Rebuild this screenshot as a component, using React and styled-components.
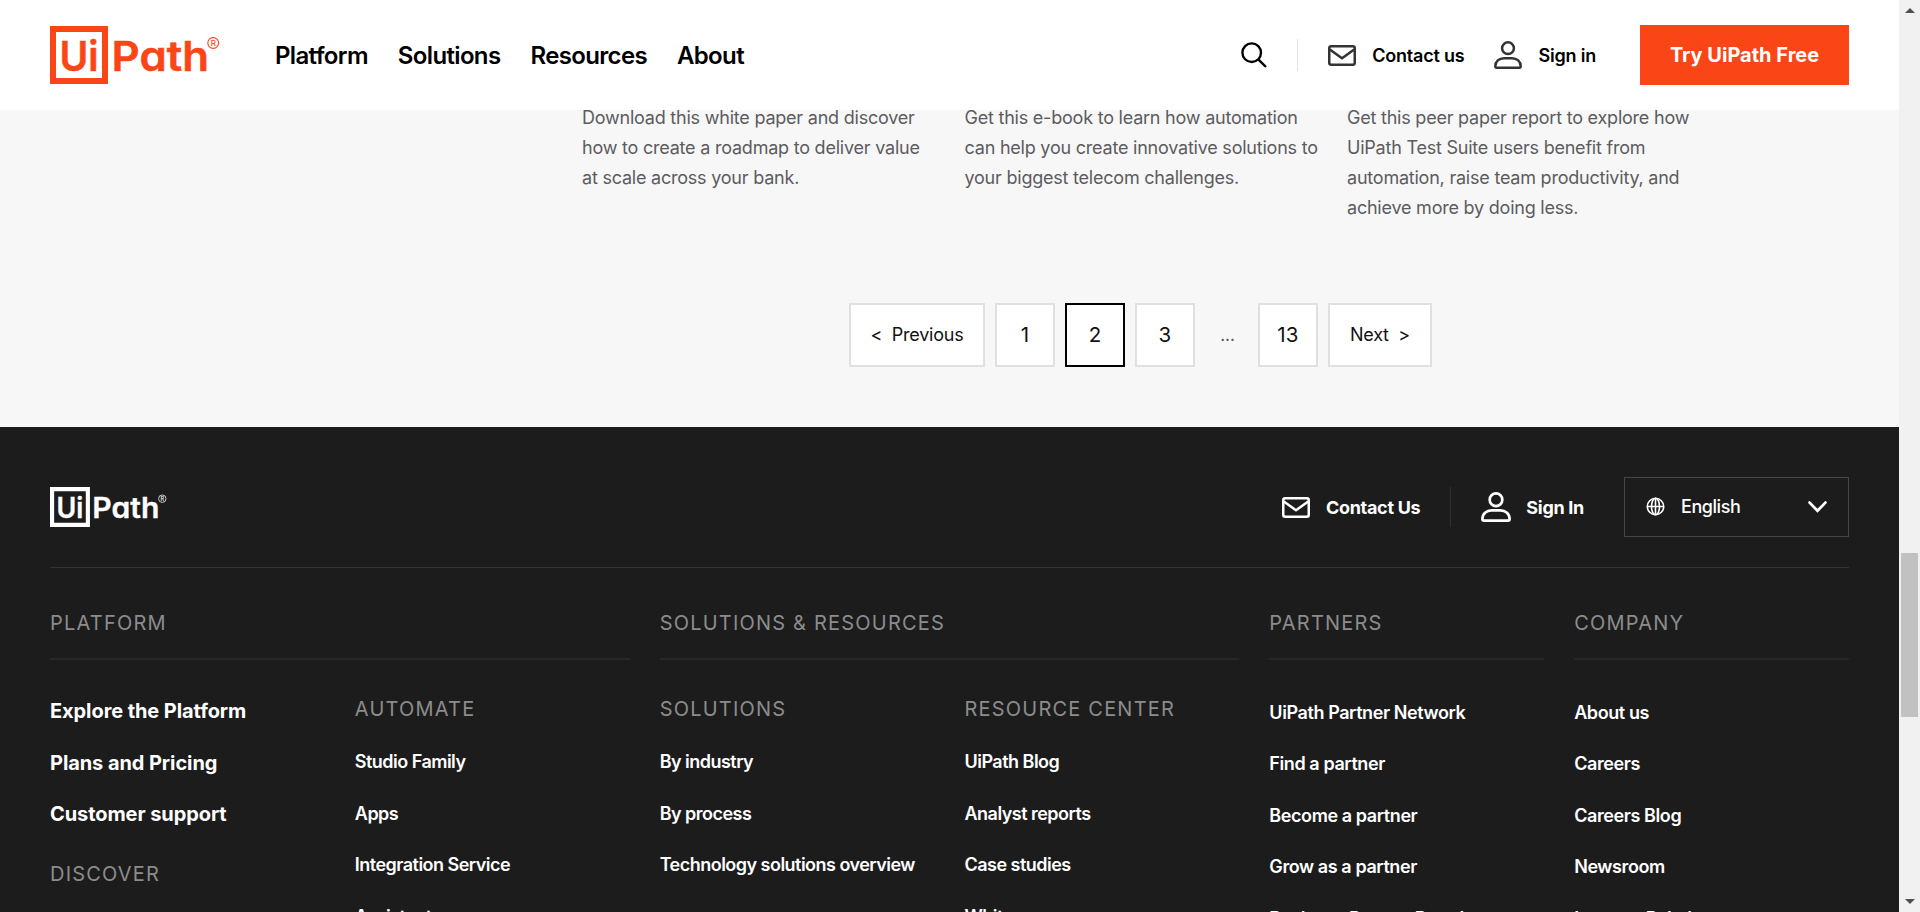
import React from "react";
import styled, { createGlobalStyle } from "styled-components";

const Global = createGlobalStyle`
  *, *::before, *::after { box-sizing: border-box; }
  html, body { margin: 0; padding: 0; }
  body { font-family: Inter, "Liberation Sans", sans-serif; overflow: hidden; }
`;

const Window = styled.div`
  display: grid;
  grid-template-columns: 1fr 21px;
  width: 1920px;
  height: 912px;
  overflow: hidden;
`;

const Page = styled.div`
  display: flex;
  flex-direction: column;
  min-width: 0;
  height: 912px;
  overflow: hidden;
  background: #f7f7f7;
`;

const Header = styled.header`
  display: flex;
  align-items: center;
  flex: none;
  height: 110px;
  padding: 0 50px;
  background: #fff;
`;

const LogoSvg = styled.svg`
  display: block;
  flex: none;
  font-family: Inter, sans-serif;
  font-feature-settings: "cv11";
`;

const Nav = styled.nav`
  display: flex;
  gap: 30px;
  margin-left: 55px;
`;

const NavLink = styled.a`
  font-size: 24px;
  font-weight: 600;
  letter-spacing: -0.65px;
  color: #000;
`;

const Actions = styled.div`
  display: flex;
  align-items: center;
  margin-left: auto;
`;

const Divider = styled.span`
  width: 1px;
  height: ${(p) => p.$height}px;
  margin: ${(p) => p.$margin};
  background: ${(p) => p.$color};
`;

const ActionLink = styled.a`
  display: flex;
  align-items: center;
  gap: ${(p) => p.$gap}px;
  margin-right: ${(p) => p.$after}px;
  font-size: 18px;
  font-weight: ${(p) => p.$weight};
  letter-spacing: ${(p) => p.$spacing}px;
  white-space: nowrap;
  color: ${(p) => p.$color};
`;

const PrimaryButton = styled.button`
  width: 209px;
  height: 60px;
  padding: 0;
  border: 0;
  background: #fa4616;
  color: #fff;
  font: 700 20px Inter, sans-serif;
  letter-spacing: 0;
`;

const Results = styled.main`
  flex: none;
  height: 317px;
  padding-left: 582px;
  padding-right: 50px;
  padding-bottom: 60px;
  display: flex;
  flex-direction: column;
  justify-content: space-between;
`;

const Cards = styled.div`
  display: grid;
  grid-template-columns: repeat(3, 382.5px);
  margin-top: -7px;
  clip-path: inset(7px 0 0 0);
`;

const CardText = styled.p`
  margin: 0;
  font-size: 18px;
  line-height: 30px;
  letter-spacing: -0.22px;
  color: #5c5c5e;
  white-space: nowrap;
`;

const Pagination = styled.div`
  display: flex;
  align-items: center;
  gap: 10px;
  margin-left: 267px;
`;

const PageButton = styled.button`
  width: ${(p) => p.$width || 60}px;
  height: 64px;
  padding: 0 0 1px;
  border: 2px solid ${(p) => (p.$current ? "#000" : "#e0e0e0")};
  background: #fff;
  color: #111;
  font: 400 ${(p) => (p.$width ? 18 : 20.5)}px Inter, sans-serif;
  letter-spacing: ${(p) => (p.$width ? -0.25 : 0.2)}px;
  white-space: pre;
`;

const Ellipsis = styled.span`
  width: 43px;
  padding-left: 2px;
  text-align: center;
  font-size: 17px;
  color: #555;
`;

const Footer = styled.footer`
  flex: 1;
  min-height: 0;
  padding: 50px 50px 0;
  overflow: hidden;
  background: #1c1c1c;
  color: #fff;
`;

const FooterTop = styled.div`
  display: flex;
  align-items: center;
  height: 91px;
  padding-bottom: 30px;
  border-bottom: 1px solid #343434;
`;

const LanguageSelect = styled.div`
  display: flex;
  align-items: center;
  width: 225px;
  height: 60px;
  padding: 0 21px 1px 21px;
  border: 1px solid #474747;
  font-size: 18px;
  font-weight: 500;
  letter-spacing: -0.45px;
`;

const LanguageName = styled.span`
  flex: 1;
  margin-left: 16px;
`;

const FooterGrid = styled.div`
  display: grid;
  grid-template-columns: repeat(6, 1fr);
  column-gap: 30px;
`;

const GroupTitle = styled.h3`
  grid-column: span ${(p) => p.$span};
  margin: 0;
  height: 92px;
  padding-top: 43px;
  border-bottom: 2px solid #272727;
  font-size: 20px;
  line-height: 24px;
  font-weight: 400;
  letter-spacing: 1.2px;
  color: #8c8c8c;
`;

const Column = styled.div`
  display: flex;
  flex-direction: column;
  padding-top: ${(p) => p.$top}px;
  letter-spacing: ${(p) => p.$spacing}px;
`;

const SubTitle = styled.h4`
  margin: ${(p) => p.$top || 0}px 0 ${(p) => p.$bottom || 0}px;
  font-size: 20px;
  line-height: 24px;
  font-weight: 400;
  letter-spacing: 1.2px;
  color: #8c8c8c;
`;

const FooterLink = styled.a`
  height: 51.6px;
  line-height: 51.6px;
  font-size: ${(p) => (p.$large ? 20 : 18)}px;
  font-weight: ${(p) => (p.$large ? 700 : 600)};
  white-space: nowrap;
`;

const Scrollbar = styled.div`
  display: flex;
  flex-direction: column;
  align-items: center;
  height: 912px;
  padding: 8px 0;
  background: #f1f1f1;
`;

const ScrollArrow = styled.span`
  border: 5px solid transparent;
  border-top-width: ${(p) => (p.$up ? 0 : 5)}px;
  border-bottom-width: ${(p) => (p.$up ? 5 : 0)}px;
  border-${(p) => (p.$up ? "bottom" : "top")}-color: #505050;
`;

const ScrollThumb = styled.span`
  width: 17px;
  height: 164px;
  margin: 540px 0 auto;
  background: #c1c1c1;
`;

const Logo = ({ width, color }) => (
  <LogoSvg width={width} height={(width * 58) / 170} viewBox="0 0 170 58" fill={color}>
    <path fillRule="evenodd" d="M0 0H58V58H0ZM6 6V52H52V6Z" />
    <g fontSize="41" fontWeight="600" stroke={color} strokeWidth="0.5">
      <text x="9.5" y="45" textLength="39" lengthAdjust="spacingAndGlyphs">Ui</text>
      <text x="61.5" y="45" textLength="97.5" lengthAdjust="spacingAndGlyphs">Path</text>
    </g>
    <circle cx="163.2" cy="17" r="5.4" fill="none" stroke={color} strokeWidth="1.1" />
    <text x="163.3" y="20" fontSize="8" fontWeight="500" textAnchor="middle">R</text>
  </LogoSvg>
);

const SearchIcon = () => (
  <svg width="26" height="26" viewBox="0 0 26 26" fill="none" stroke="#000" strokeWidth="2.4">
    <circle cx="10.7" cy="10.7" r="9.3" />
    <path d="M17.3 17.3L25 25" />
  </svg>
);

const MailIcon = ({ width, color }) => (
  <svg width={width} height={(width * 21) / 28} viewBox="0 0 28 21" fill="none" stroke={color} strokeWidth="2.5" strokeLinejoin="round">
    <rect x="1.25" y="1.25" width="25.5" height="18.5" rx="2" />
    <path d="M1.8 4.5L14 13.2L26.2 4.5" />
  </svg>
);

const UserIcon = ({ width, color }) => (
  <svg width={width} height={width} viewBox="0 0 28 28" fill="none" stroke={color} strokeWidth="2.5" strokeLinejoin="round">
    <circle cx="14" cy="7.2" r="5.9" />
    <path d="M1.3 25.3C1.3 20.5 5 17.2 10 17.2H18C23 17.2 26.7 20.5 26.7 25.3Q26.7 26.7 25.3 26.7H2.7Q1.3 26.7 1.3 25.3Z" />
  </svg>
);

const GlobeIcon = () => (
  <svg width="19" height="19" viewBox="0 0 19 19" fill="none" stroke="#fff" strokeWidth="1.6">
    <circle cx="9.5" cy="9.5" r="8.2" />
    <ellipse cx="9.5" cy="9.5" rx="4" ry="8.2" />
    <path d="M9.5 1V18M1 9.5H18" />
  </svg>
);

const ChevronIcon = () => (
  <svg width="19" height="12" viewBox="0 0 19 12" fill="none" stroke="#fff" strokeWidth="2.8" strokeLinecap="round">
    <path d="M1.6 1.6L9.5 9.8L17.4 1.6" />
  </svg>
);

const cards = [
  ["Download this white paper and discover", "how to create a roadmap to deliver value", "at scale across your bank."],
  ["Get this e-book to learn how automation", "can help you create innovative solutions to", "your biggest telecom challenges."],
  ["Get this peer paper report to explore how", "UiPath Test Suite users benefit from", "automation, raise team productivity, and", "achieve more by doing less."],
];

const columns = [
  { title: "AUTOMATE", links: ["Studio Family", "Apps", "Integration Service", "Assistant"] },
  { title: "SOLUTIONS", links: ["By industry", "By process", "Technology solutions overview"] },
  { title: "RESOURCE CENTER", links: ["UiPath Blog", "Analyst reports", "Case studies", "White papers"] },
  { links: ["UiPath Partner Network", "Find a partner", "Become a partner", "Grow as a partner", "Business Partner Portal"] },
  { links: ["About us", "Careers", "Careers Blog", "Newsroom", "Investor Relations"] },
];

export default function App() {
  return (
    <Window>
      <Global />
      <Page>
        <Header>
          <Logo width={170} color="#fa4616" />
          <Nav>
            {["Platform", "Solutions", "Resources", "About"].map((n) => (
              <NavLink key={n}>{n}</NavLink>
            ))}
          </Nav>
          <Actions>
            <SearchIcon />
            <Divider $height={32} $margin="0 30px 0 30px" $color="#e4e4e4" />
            <ActionLink $gap={16} $after={30} $weight={600} $spacing={-0.2} $color="#000">
              <MailIcon width={28} color="#333" />
              Contact us
            </ActionLink>
            <ActionLink $gap={16} $after={44} $weight={600} $spacing={-0.2} $color="#000">
              <UserIcon width={28} color="#333" />
              Sign in
            </ActionLink>
            <PrimaryButton>Try UiPath Free</PrimaryButton>
          </Actions>
        </Header>
        <Results>
          <Cards>
            {cards.map((lines) => (
              <CardText key={lines[0]}>
                {lines.map((l) => (
                  <React.Fragment key={l}>
                    {l}
                    <br />
                  </React.Fragment>
                ))}
              </CardText>
            ))}
          </Cards>
          <Pagination>
            <PageButton $width={136}>{"<  Previous"}</PageButton>
            <PageButton>1</PageButton>
            <PageButton $current>2</PageButton>
            <PageButton>3</PageButton>
            <Ellipsis>...</Ellipsis>
            <PageButton>13</PageButton>
            <PageButton $width={104}>{"Next  >"}</PageButton>
          </Pagination>
        </Results>
        <Footer>
          <FooterTop>
            <Logo width={117} color="#fff" />
            <Actions>
              <ActionLink $gap={16} $after={30} $weight={700} $spacing={-0.3} $color="#fff">
                <MailIcon width={28} color="#fff" />
                Contact Us
              </ActionLink>
              <Divider $height={40} $margin="0 30px 0 0" $color="#303030" />
              <ActionLink $gap={15} $after={40} $weight={700} $spacing={-0.3} $color="#fff">
                <UserIcon width={30} color="#fff" />
                Sign In
              </ActionLink>
              <LanguageSelect>
                <GlobeIcon />
                <LanguageName>English</LanguageName>
                <ChevronIcon />
              </LanguageSelect>
            </Actions>
          </FooterTop>
          <FooterGrid>
            <GroupTitle $span={2}>PLATFORM</GroupTitle>
            <GroupTitle $span={2}>SOLUTIONS &amp; RESOURCES</GroupTitle>
            <GroupTitle $span={1}>PARTNERS</GroupTitle>
            <GroupTitle $span={1}>COMPANY</GroupTitle>
            <Column $top={26} $spacing={-0.08}>
              <FooterLink $large>Explore the Platform</FooterLink>
              <FooterLink $large>Plans and Pricing</FooterLink>
              <FooterLink $large>Customer support</FooterLink>
              <SubTitle $top={21}>DISCOVER</SubTitle>
            </Column>
            {columns.map((c) => (
              <Column key={c.links[0]} $top={c.title ? 37 : 26.5} $spacing={c.title ? -0.52 : -0.41}>
                {c.title && <SubTitle $bottom={15}>{c.title}</SubTitle>}
                {c.links.map((l) => (
                  <FooterLink key={l}>{l}</FooterLink>
                ))}
              </Column>
            ))}
          </FooterGrid>
        </Footer>
      </Page>
      <Scrollbar>
        <ScrollArrow $up />
        <ScrollThumb />
        <ScrollArrow />
      </Scrollbar>
    </Window>
  );
}
